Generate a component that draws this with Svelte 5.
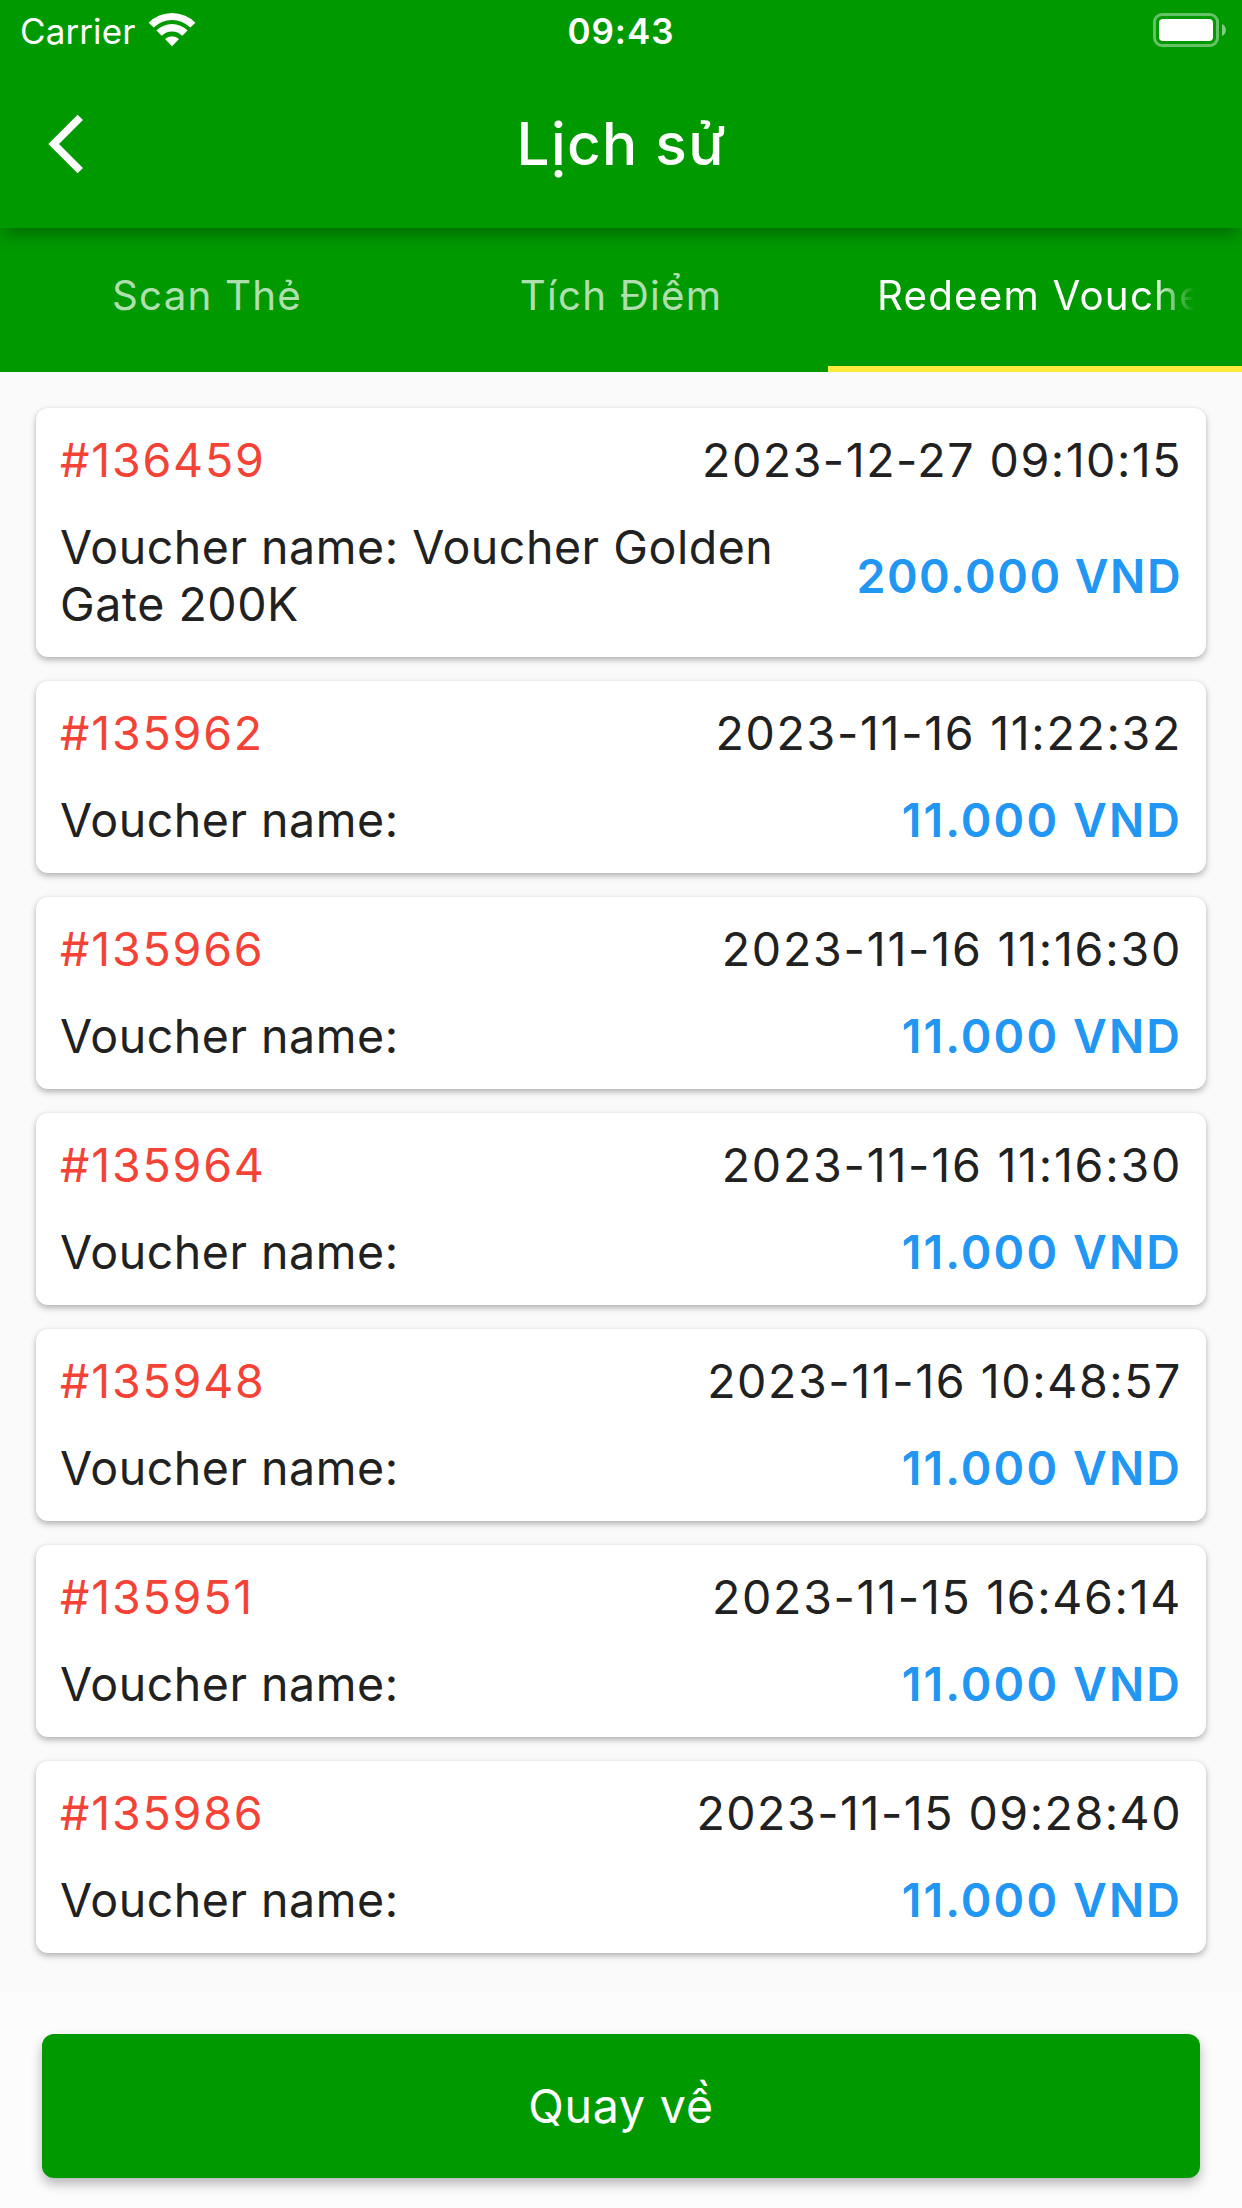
<script lang="ts">
  type Voucher = {
    id: string;
    time: string;
    name: string;
    amount: string;
  };

  const tabs = ['Scan Thẻ', 'Tích Điểm', 'Redeem Voucher'];

  const vouchers: Voucher[] = [
    { id: '136459', time: '2023-12-27 09:10:15', name: 'Voucher Golden Gate 200K', amount: '200.000' },
    { id: '135962', time: '2023-11-16 11:22:32', name: '', amount: '11.000' },
    { id: '135966', time: '2023-11-16 11:16:30', name: '', amount: '11.000' },
    { id: '135964', time: '2023-11-16 11:16:30', name: '', amount: '11.000' },
    { id: '135948', time: '2023-11-16 10:48:57', name: '', amount: '11.000' },
    { id: '135951', time: '2023-11-15 16:46:14', name: '', amount: '11.000' },
    { id: '135986', time: '2023-11-15 09:28:40', name: '', amount: '11.000' },
  ];

  let active = $state(2);

  function tracking(text: string, free: number, step: number) {
    const ones = text.split('1').length - 1;
    return 1.5 + Math.max(0, ones - free) * step;
  }
</script>

<div class="screen">
  <header>
    <div class="status">
      <div class="carrier">
        <span>Carrier</span>
        <svg class="wifi" width="46" height="34" viewBox="0 0 46 34" fill="#fff">
          <path d="M-.33 9.67a33 33 0 0 1 46.66 0l-4.95 4.95a26 26 0 0 0-36.76 0z" />
          <path d="M7.44 17.44a22 22 0 0 1 31.12 0l-5.3 5.3a14.5 14.5 0 0 0-20.52 0z" />
          <path d="M16 26a10 10 0 0 1 14 0l-7 7.2z" />
        </svg>
      </div>
      <span class="clock">09:43</span>
      <div class="power">
        <svg width="73" height="34" viewBox="0 0 73 34">
          <rect x="1.5" y="1.5" width="63" height="31" rx="7.5" fill="none" stroke="#fff" stroke-opacity=".4" stroke-width="3" />
          <rect x="6" y="6" width="54" height="22" rx="4" fill="#fff" />
          <path d="M69 11a6.6 6.6 0 0 1 0 12z" fill="#fff" fill-opacity=".5" />
        </svg>
      </div>
    </div>
    <div class="appbar">
      <button class="back" aria-label="Back">
        <svg width="36" height="60" viewBox="0 0 36 60" fill="none" stroke="#fff" stroke-width="7.5">
          <path d="M32.3 3.3 5.6 30l26.7 26.7" />
        </svg>
      </button>
      <h1>Lịch sử</h1>
    </div>
  </header>

  <nav>
    {#each tabs as tab, i}
      <button class="tab" class:active={active === i} onclick={() => (active = i)}>
        <span>{tab}</span>
      </button>
    {/each}
  </nav>

  <main>
    {#each vouchers as voucher}
      <article>
        <div class="row">
          <span class="code">#{voucher.id}</span>
          <span style:letter-spacing="{tracking(voucher.time, 3, 0.09)}px">{voucher.time}</span>
        </div>
        <div class="row">
          <span class="name">Voucher name: {voucher.name}</span>
          <span class="amount" style:letter-spacing="{tracking(voucher.amount, 0, 0.3)}px">{voucher.amount} VND</span>
        </div>
      </article>
    {/each}
  </main>

  <footer>
    <button class="return">Quay về</button>
  </footer>
</div>

<style>
  :global(body) {
    margin: 0;
  }

  .screen {
    width: 1242px;
    height: 2208px;
    display: flex;
    flex-direction: column;
    overflow: hidden;
    background: #fafafa;
    color: #212121;
    font-family: Inter, Roboto, sans-serif;
    font-size: 46.5px;
    line-height: 57px;
    letter-spacing: 1.5px;
  }

  button {
    border: none;
    padding: 0;
    color: inherit;
    font: inherit;
    letter-spacing: inherit;
    cursor: pointer;
  }

  header {
    z-index: 1;
    height: 228px;
    flex: none;
    background: #009900;
    color: #fff;
    box-shadow: 0 10px 15px -3px rgba(0, 0, 0, 0.28);
  }

  .status {
    height: 60px;
    display: grid;
    grid-template-columns: 1fr auto 1fr;
    font-size: 35px;
    line-height: 63px;
    letter-spacing: 0.1px;
  }

  .carrier {
    display: flex;
    gap: 14px;
    padding-left: 20px;
  }

  .wifi {
    margin-top: 13px;
    overflow: visible;
  }

  .clock {
    font-weight: 600;
    letter-spacing: 1px;
  }

  .power {
    display: flex;
    justify-content: flex-end;
    padding: 13px 16px 0 0;
  }

  .appbar {
    height: 168px;
    display: grid;
    grid-template-columns: 120px 1fr 120px;
    align-items: center;
  }

  .back {
    display: flex;
    padding-left: 48px;
    background: none;
  }

  h1 {
    margin: 0;
    padding-left: 1px;
    font-size: 58.5px;
    font-weight: 500;
    line-height: 72px;
    letter-spacing: 1.3px;
    text-align: center;
  }

  nav {
    height: 144px;
    flex: none;
    display: grid;
    grid-template-columns: repeat(3, 1fr);
    background: #009900;
  }

  .tab {
    min-width: 0;
    padding: 0 48px 4px;
    border-bottom: 6px solid transparent;
    background: none;
    color: rgba(255, 255, 255, 0.7);
    font-size: 40.3px;
    letter-spacing: 1.2px;
  }

  .tab.active {
    padding-left: 49px;
    border-color: #ffeb3b;
    color: #fff;
    text-align: left;
  }

  .tab span {
    display: block;
    overflow: hidden;
    white-space: nowrap;
  }

  .tab.active span {
    mask-image: linear-gradient(to right, #000 calc(100% - 42px), transparent);
  }

  main {
    height: 1620px;
    box-sizing: border-box;
    flex: none;
    display: flex;
    flex-direction: column;
    gap: 24px;
    padding: 36px;
  }

  article {
    display: flex;
    flex-direction: column;
    gap: 30px;
    padding: 24px;
    border-radius: 12px;
    background: #fff;
    box-shadow: 0 3px 6px rgba(0, 0, 0, 0.28), 0 0 3px rgba(0, 0, 0, 0.06);
  }

  .row {
    display: flex;
    align-items: center;
    justify-content: space-between;
    gap: 24px;
  }

  .code {
    color: #f44336;
    letter-spacing: 1.8px;
  }

  .name {
    max-width: 740px;
    letter-spacing: 0.53px;
  }

  .amount {
    color: #2196f3;
    font-weight: 600;
    white-space: nowrap;
  }

  footer {
    flex: 1;
    padding: 42px 42px 0;
    background: #fcfcfc;
  }

  .return {
    width: 100%;
    height: 144px;
    border-radius: 12px;
    background: #009900;
    color: #fff;
    letter-spacing: 0.8px;
    box-shadow: 0 6px 12px rgba(0, 0, 0, 0.28);
  }
</style>
